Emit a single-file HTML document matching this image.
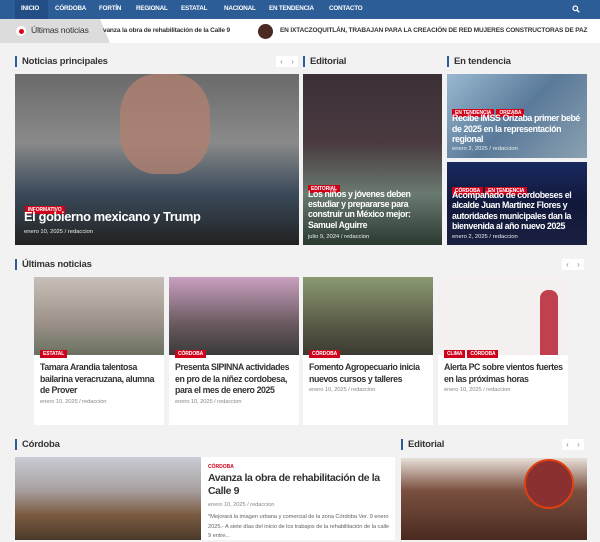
<!DOCTYPE html>
<html><head><meta charset="utf-8"><style>
*{margin:0;padding:0;box-sizing:border-box}
body{width:600px;height:540px;overflow:hidden;background:#f2f2f2;font-family:"Liberation Sans",sans-serif;position:relative}
.a{position:absolute}
.nav{left:0;top:0;width:600px;height:19px;background:#2c5d97}
.nav span{position:absolute;top:5px;font-size:6.3px;font-weight:bold;color:#fff;letter-spacing:-0.2px}
.tick{left:0;top:19px;width:600px;height:24px;background:#fff}
.h{font-size:9.5px;font-weight:bold;color:#333;border-left:2px solid #2c5d97;padding-left:5px;line-height:11px;letter-spacing:-0.2px}
.arr{width:11px;height:11px;background:#fff;font-size:8px;color:#888;text-align:center;line-height:11px}
.tag{background:#d0021b;color:#fff;font-size:5px;font-weight:bold;padding:1px 3px;display:inline-block;margin-right:2px;letter-spacing:-0.1px;line-height:6px}
.wt{color:#fff;font-weight:bold;letter-spacing:-0.4px}
.meta{font-size:5.8px;color:#888;letter-spacing:-0.1px}
.card{background:#fff}
.ct{font-size:8.8px;font-weight:bold;color:#333;line-height:11.5px;letter-spacing:-0.4px}
</style></head><body>
<div class="a nav">
<div class="a" style="left:15px;top:0;width:33px;height:19px;background:#234e85"></div>
<span style="left:21px">INICIO</span><span style="left:55px">CÓRDOBA</span><span style="left:99px">FORTÍN</span><span style="left:136px">REGIONAL</span><span style="left:181px">ESTATAL</span><span style="left:224px">NACIONAL</span><span style="left:269px">EN TENDENCIA</span><span style="left:329px">CONTACTO</span>
<svg class="a" style="left:572px;top:5px" width="8" height="8" viewBox="0 0 8 8"><circle cx="3.3" cy="3.3" r="2.3" fill="none" stroke="#fff" stroke-width="1.2"/><path d="M5 5L7.3 7.3" stroke="#fff" stroke-width="1.3"/></svg>
</div>
<div class="a tick">
<div class="a" style="left:0;top:0;width:110px;height:24px;background:#dcdcdc;clip-path:polygon(0 0,100px 0,110px 24px,0 24px)"></div>
<div class="a" style="left:16px;top:7px;width:10px;height:10px;border-radius:50%;background:#fff"></div>
<div class="a" style="left:18.5px;top:9.5px;width:5px;height:5px;border-radius:50%;background:#e0001a"></div>
<div class="a" style="left:31px;top:6px;font-size:8.7px;color:#333;letter-spacing:-0.2px">Últimas noticias</div>
<div class="a" style="left:103px;top:7.5px;font-size:6.6px;color:#333;font-weight:bold;letter-spacing:-0.2px">vanza la obra de rehabilitación de la Calle 9</div>
<div class="a" style="left:258px;top:5px;width:15px;height:15px;border-radius:50%;background:#4a2a22"></div>
<div class="a" style="left:280px;top:7.5px;font-size:6.5px;color:#333;font-weight:bold;white-space:nowrap;letter-spacing:-0.15px">EN IXTACZOQUITLÁN, TRABAJAN PARA LA CREACIÓN DE RED MUJERES CONSTRUCTORAS DE PAZ</div>
</div>

<div class="a h" style="left:15px;top:56px">Noticias principales</div>
<div class="a arr" style="left:276px;top:56px">‹</div><div class="a arr" style="left:287px;top:56px">›</div>
<div class="a h" style="left:303px;top:56px">Editorial</div>
<div class="a h" style="left:447px;top:56px">En tendencia</div>

<div class="a" style="left:15px;top:74px;width:284px;height:171px;background:linear-gradient(180deg,#6a6a6a,#8a8a8a 40%,#3a4a5a 70%,#222)"></div>
<div class="a" style="left:120px;top:74px;width:90px;height:100px;background:#b08070;border-radius:40%;opacity:.8"></div>
<div class="a" style="left:25px;top:198px"><span class="tag">INFORMATIVO</span></div>
<div class="a wt" style="left:24px;top:209px;font-size:12.8px;letter-spacing:-0.35px">El gobierno mexicano y Trump</div>
<div class="a" style="left:24px;top:229px;font-size:5.8px;color:#eee">enero 10, 2025 / redaccion</div>

<div class="a" style="left:303px;top:74px;width:139px;height:171px;background:linear-gradient(180deg,#3a3036,#4a3a40 40%,#6a7a70 70%,#2a3a30)"></div>
<div class="a" style="left:308px;top:177px"><span class="tag">EDITORIAL</span></div>
<div class="a wt" style="left:308px;top:189px;font-size:8.8px;line-height:10.2px;width:125px">Los niños y jóvenes deben estudiar y prepararse para construir un México mejor: Samuel Aguirre</div>
<div class="a" style="left:308px;top:234px;font-size:5.8px;color:#eee">julio 9, 2024 / redaccion</div>

<div class="a" style="left:447px;top:74px;width:140px;height:84px;background:linear-gradient(135deg,#9ab8d0,#5a7a9a 50%,#8aa0b0)"></div>
<div class="a" style="left:452px;top:101px"><span class="tag">EN TENDENCIA</span><span class="tag">ORIZABA</span></div>
<div class="a wt" style="left:452px;top:113px;font-size:8.8px;line-height:10.5px;width:134px">Recibe IMSS Orizaba primer bebé de 2025 en la representación regional</div>
<div class="a" style="left:452px;top:146px;font-size:5.8px;color:#eee">enero 2, 2025 / redaccion</div>
<div class="a" style="left:447px;top:162px;width:140px;height:83px;background:linear-gradient(180deg,#1a2a60,#10183a 50%,#1a2040)"></div>
<div class="a" style="left:452px;top:179px"><span class="tag">CÓRDOBA</span><span class="tag">EN TENDENCIA</span></div>
<div class="a wt" style="left:452px;top:190px;font-size:8.8px;line-height:10.3px;width:134px">Acompañado de cordobeses el alcalde Juan Martínez Flores y autoridades municipales dan la bienvenida al año nuevo 2025</div>
<div class="a" style="left:452px;top:234px;font-size:5.8px;color:#eee">enero 2, 2025 / redaccion</div>

<div class="a h" style="left:15px;top:259px">Últimas noticias</div>
<div class="a arr" style="left:562px;top:259px">‹</div><div class="a arr" style="left:573px;top:259px">›</div>

<div class="a card" style="left:34px;top:277px;width:130px;height:148px"></div>
<div class="a" style="left:34px;top:277px;width:130px;height:78px;background:linear-gradient(180deg,#c8c0b8,#9a9088 60%,#6a7060)"></div>
<div class="a" style="left:40px;top:342px"><span class="tag">ESTATAL</span></div>
<div class="a ct" style="left:40px;top:362px;width:124px">Tamara Arandia talentosa bailarina veracruzana, alumna de Prover</div>
<div class="a meta" style="left:40px;top:399px">enero 10, 2025 / redaccion</div>

<div class="a card" style="left:169px;top:277px;width:130px;height:148px"></div>
<div class="a" style="left:169px;top:277px;width:130px;height:78px;background:linear-gradient(180deg,#c8a0c0,#6a5a60 60%,#3a3a3a)"></div>
<div class="a" style="left:175px;top:342px"><span class="tag">CÓRDOBA</span></div>
<div class="a ct" style="left:175px;top:362px;width:124px">Presenta SIPINNA actividades en pro de la niñez cordobesa, para el mes de enero 2025</div>
<div class="a meta" style="left:175px;top:399px">enero 10, 2025 / redaccion</div>

<div class="a card" style="left:303px;top:277px;width:130px;height:148px"></div>
<div class="a" style="left:303px;top:277px;width:130px;height:78px;background:linear-gradient(180deg,#8a9a70,#5a5a48 60%,#3a3a30)"></div>
<div class="a" style="left:309px;top:342px"><span class="tag">CÓRDOBA</span></div>
<div class="a ct" style="left:309px;top:362px;width:124px">Fomento Agropecuario inicia nuevos cursos y talleres</div>
<div class="a meta" style="left:309px;top:387px">enero 10, 2025 / redaccion</div>

<div class="a card" style="left:438px;top:277px;width:130px;height:148px"></div>
<div class="a" style="left:438px;top:277px;width:130px;height:78px;background:#f4f0f0"></div>
<div class="a" style="left:540px;top:290px;width:18px;height:65px;background:#c04050;border-radius:8px 8px 0 0"></div>
<div class="a" style="left:444px;top:342px"><span class="tag">CLIMA</span><span class="tag">CÓRDOBA</span></div>
<div class="a ct" style="left:444px;top:362px;width:124px">Alerta PC sobre vientos fuertes en las próximas horas</div>
<div class="a meta" style="left:444px;top:387px">enero 10, 2025 / redaccion</div>

<div class="a h" style="left:15px;top:439px">Córdoba</div>
<div class="a h" style="left:401px;top:439px">Editorial</div>
<div class="a arr" style="left:562px;top:439px">‹</div><div class="a arr" style="left:573px;top:439px">›</div>

<div class="a card" style="left:15px;top:457px;width:380px;height:83px"></div>
<div class="a" style="left:15px;top:457px;width:186px;height:83px;background:linear-gradient(180deg,#c8ccd4,#a8a0a0 40%,#7a5a40 70%,#4a3a2a)"></div>
<div class="a" style="left:208px;top:464px;font-size:5px;font-weight:bold;color:#d0021b">CÓRDOBA</div>
<div class="a ct" style="left:208px;top:472px;width:180px;font-size:10.5px;line-height:13px">Avanza la obra de rehabilitación de la Calle 9</div>
<div class="a meta" style="left:208px;top:502px">enero 10, 2025 / redaccion</div>
<div class="a" style="left:208px;top:513px;width:185px;font-size:5.8px;line-height:9.5px;color:#666;letter-spacing:-0.1px">*Mejorará la imagen urbana y comercial de la zona Córdoba Ver. 9 enero 2025.- A siete días del inicio de los trabajos de la rehabilitación de la calle 9 entre...</div>

<div class="a" style="left:401px;top:458px;width:186px;height:82px;background:linear-gradient(180deg,#e8e0d8,#7a5040 40%,#4a2a20)"></div>
<div class="a" style="left:524px;top:459px;width:50px;height:50px;border-radius:50%;border:2px solid #e04010;background:#8a3030"></div>
</body></html>
